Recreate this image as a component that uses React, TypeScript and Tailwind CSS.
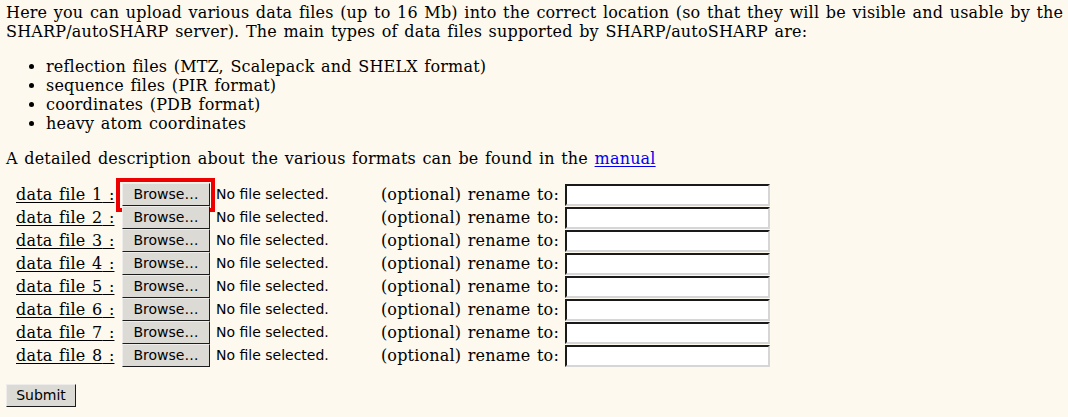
import React from 'react';

const serif = "font-['DejaVu_Serif','Liberation_Serif',serif] tracking-[0.18px] [word-spacing:1.3px]";
const sans = "font-['DejaVu_Sans','Liberation_Sans',sans-serif] tracking-normal [word-spacing:0px]";

const fileTypes = [
  'reflection files (MTZ, Scalepack and SHELX format)',
  'sequence files (PIR format)',
  'coordinates (PDB format)',
  'heavy atom coordinates',
];

// Old GTK-style push button
const OldButton: React.FC<{ label: string; className?: string }> = ({ label, className = '' }) => (
  <button
    type="button"
    className={`${sans} flex items-center justify-center bg-[#dcdad5] text-[14px] text-black border border-t-[#eeedeb] border-l-[#eeedeb] border-r-[#1c1c1c] border-b-[#1c1c1c] ${className}`}
  >
    {label}
  </button>
);

const FileRow: React.FC<{ n: number }> = ({ n }) => (
  <div className="flex h-[23px] items-center">
    <div className="w-[116px] shrink-0 pl-[10px]">
      <span className="underline underline-offset-2">data file {n} :</span>
    </div>
    <div className="relative flex w-[243px] shrink-0 items-center">
      <OldButton label="Browse…" className="h-[23px] w-[88px]" />
      <span className={`${sans} ml-[6px] text-[14px]`}>No file selected.</span>
      {n === 1 && (
        <div className="absolute left-[-6px] top-[-5px] h-[34px] w-[99px] border-4 border-[#ee0000]" />
      )}
    </div>
    <div className="w-[200px] shrink-0 whitespace-nowrap pr-[6px] text-right">(optional) rename to:</div>
    <div className="h-[22px] w-[205px] shrink-0 border-2 border-t-[#1a1a1a] border-l-[#1a1a1a] border-r-[#d6d6d6] border-b-[#d6d6d6] bg-white" />
  </div>
);

export default function App() {
  return (
    <div className={`${serif} min-h-[417px] bg-[#fdf9ef] pl-[6px] pr-0 pt-[3px] text-[16px] leading-[19px] text-black`}>
      <p>
        Here you can upload various data files (up to 16 Mb) into the correct location (so that they will be visible and
        usable by the SHARP/autoSHARP server). The main types of data files supported by SHARP/autoSHARP are:
      </p>

      <ul className="my-[16px] list-disc pl-[40px]">
        {fileTypes.map(t => (
          <li key={t}>{t}</li>
        ))}
      </ul>

      <p>
        A detailed description about the various formats can be found in the{' '}
        <a href="#" className="text-[#0000ee] underline underline-offset-2">manual</a>
      </p>

      <div className="mt-[15px] flex flex-col">
        {[1, 2, 3, 4, 5, 6, 7, 8].map(n => (
          <FileRow key={n} n={n} />
        ))}
      </div>

      <div className="mt-[17px]">
        <OldButton label="Submit" className="h-[23px] w-[70px]" />
      </div>
    </div>
  );
}
